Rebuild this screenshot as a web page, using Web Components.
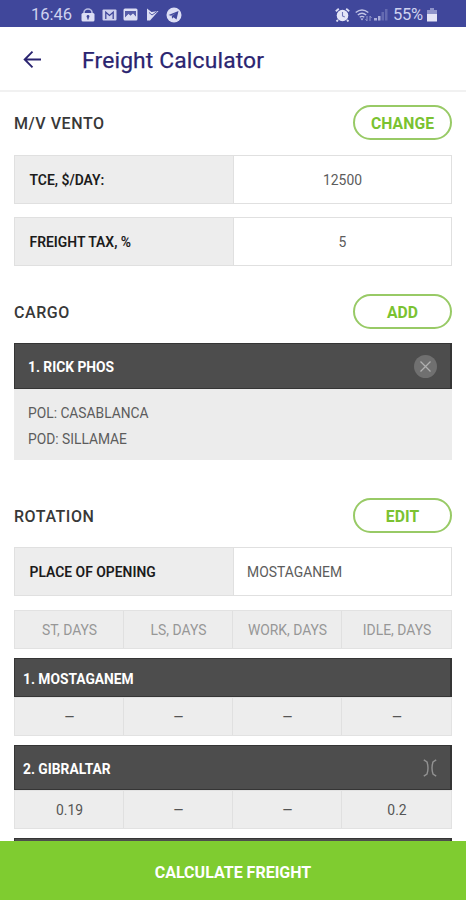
<!DOCTYPE html>
<html lang="en">
<head>
<meta charset="utf-8">
<title>Freight Calculator</title>
<style>
html,body{margin:0;height:100%;background:#fff}
body{font-family:Roboto,"Liberation Sans",sans-serif;overflow:hidden}
</style>
</head>
<body>
<freight-app></freight-app>
<script>
const define = (name, html) => {
  const t = document.createElement('template');
  t.innerHTML = html;
  customElements.define(name, class extends HTMLElement {
    constructor() {
      super();
      this.attachShadow({ mode: 'open' }).append(t.content.cloneNode(true));
    }
  });
};

define('status-bar', `
<style>
:host{display:flex;align-items:center;justify-content:space-between;height:27px;box-sizing:border-box;padding:2px 29px 0 31px;background:#40479b;color:#cfd2ef;font-size:16.5px;line-height:25px;flex:none}
div{display:flex;align-items:center}
svg{display:block;flex:none}
</style>
<div>
  <span style="width:50px">16:46</span>
  <svg width="14" height="14" viewBox="0 0 14 14"><path d="M3 6V4.400a4 3.400 0 0 1 8 0V6" fill="none" stroke="#b9bde2" stroke-width="1.600"/><rect x=".5" y="5" width="13" height="8.500" rx="1.500" fill="#dcdef4"/><circle cx="7" cy="8.500" r="1.400" fill="#40479b"/><path d="M6.300 8.500h1.400v3H6.300z" fill="#40479b"/></svg>
  <svg width="15" height="12" viewBox="0 0 15 12" style="margin-left:7px"><rect x=".5" y=".5" width="14" height="11" rx="1" fill="#cdd0ee"/><path d="M3.800 10V3.200L7.500 6.400l3.700-3.200V10" fill="none" stroke="#40479b" stroke-width="1.300"/></svg>
  <svg width="15" height="13" viewBox="0 0 15 13" style="margin-left:6px"><rect x=".5" y=".5" width="14" height="12" rx="1.500" fill="#dcdef4"/><path d="M2 9.500 5.500 6l2 1.800L10 5.500l3 3.200V3H2z" fill="#40479b" opacity=".85"/><path d="M2.500 9.500 5.500 6.200l2.100 2L10 5.800l3 3.700z" fill="#dcdef4"/></svg>
  <svg width="13" height="13" viewBox="0 0 13 13" style="margin-left:8px"><path d="M1 .5 5.500 4 12.500 3 4 12.500H1z" fill="#dcdef4"/><path d="m3 4.500 3 2.500 5-3.500" fill="none" stroke="#40479b" stroke-width=".9"/></svg>
  <svg width="16" height="16" viewBox="0 0 16 16" style="margin-left:7px"><circle cx="8" cy="8" r="7.500" fill="#dcdef4"/><path d="m2.500 8 10-4-2 8.500-3-2.200-1.500 1.500-.2-3L10 6 5 8.700z" fill="#40479b"/></svg>
</div>
<div>
  <svg width="15" height="14" viewBox="0 0 15 14"><circle cx="7.500" cy="7.500" r="5.800" fill="#e4e5f7"/><path d="m.8 3.200 3-2.500M14.200 3.200l-3-2.500M3 12l-1.500 1.500M12 12l1.500 1.500" stroke="#dcdef4" stroke-width="1.800"/><path d="M7.500 4v4l2.300 1" fill="none" stroke="#7278b8" stroke-width="1.100"/></svg>
  <svg width="18" height="14" viewBox="0 0 18 14" style="margin-left:5px"><g fill="none" stroke="#c1c4e6" stroke-width="1.400"><path d="M.7 4.500q6.300-5 12.600 0M2.800 7q4.200-3.500 8.400 0M4.700 9.300q2.300-1.900 4.600 0"/></g><path d="M5.500 10.500h3L7 12.500z" fill="#c1c4e6"/><path d="M12 8v5m-1.500-2L12 13M15 13V8l1.500 2" fill="none" stroke="#8f94ca"/></svg>
  <svg width="14" height="13" viewBox="0 0 14 13" style="margin-left:1px"><g fill="#a9add9"><path d="M0 10h3v2.500H0zM4 8h2.500v4.500H4z"/><path d="M7.500 4H10v8.500H7.500zM11 1h2.500v11.500H11z" opacity=".35"/></g></svg>
  <span style="margin-left:5px;width:32px;letter-spacing:-.3px">55%</span>
  <svg width="10" height="14" viewBox="0 0 10 14" style="margin-left:2px"><path d="M3 0h4v2h3v4H0V2h3z" fill="#8f94ca"/><path d="M0 6h10v7.500H0z" fill="#e4e5f7"/></svg>
</div>`);

define('app-header', `
<style>
:host{display:flex;align-items:center;height:65px;box-sizing:border-box;border-bottom:2px solid #f1f1f1;padding:3px 0 0 23px;color:#2a2470;font-size:22.8px;font-weight:400;letter-spacing:.17px;-webkit-text-stroke:.25px #2a2470;flex:none;background:#fff}
svg{display:block;margin:-1px 40px 0 0}
</style>
<svg width="19" height="18" viewBox="0 0 19 18"><path d="M18 8.500H2M9.500 .7 1.700 8.500l7.800 7.800" fill="none" stroke="#2a2470" stroke-width="1.900"/></svg>
<slot></slot>`);

define('pill-button', `
<style>
:host{display:flex;align-items:center;justify-content:center;box-sizing:border-box;width:99px;height:35px;border:2px solid #98ca66;border-radius:18px;color:#7ac231;font-size:15.7px;font-weight:700;padding-top:1px}
</style><slot></slot>`);

define('section-head', `
<style>
:host{display:flex;align-items:center;justify-content:space-between;height:35px;font-size:16px;font-weight:500;color:#383838;letter-spacing:.55px}
span{padding-top:2px}
::slotted(pill-button){letter-spacing:.1px}
</style><span><slot></slot></span><slot name="action"></slot>`);

define('field-row', `
<style>
:host{display:grid;grid-template-columns:1fr 1fr;box-sizing:border-box;height:49px;border:1px solid #e0e0e0;font-size:13.9px;line-height:47px}
.l{background:#ededed;padding-left:14.500px;font-weight:600;color:#1b1b1b}
.v{border-left:1px solid #e0e0e0;padding:0 13px 0 13px;color:#5c5c5c;text-align:var(--value-align,center)}
span{display:block}
.v,.l{padding-top:1px;height:46px}
</style>
<div class="l"><slot name="label"></slot></div><div class="v"><slot></slot></div>`);

define('dark-bar', `
<style>
:host{display:flex;align-items:center;justify-content:space-between;box-sizing:border-box;height:var(--bar-height,46px);padding:2px var(--bar-right,13px) 0 var(--bar-left,13px);background:#4d4d4d;border:1px solid #353535;border-width:1px 2px 1px 1px;color:#fff;font-size:13.8px;font-weight:700}
::slotted([slot=icon]){margin-top:-1px}
</style><slot></slot><slot name="icon"></slot>`);

define('cargo-details', `
<style>
:host{display:block;height:71px;box-sizing:border-box;background:#ececec;padding:11px 14px;font-size:13.8px;line-height:26px;color:#5c5c5c}
::slotted(div){height:26px}
</style><slot></slot>`);

define('day-cells', `
<style>
:host{display:grid;grid-template-columns:repeat(4,1fr);box-sizing:border-box;height:39px;background:#ededed;border:1px solid #e2e2e2;font-size:13.9px;color:var(--cell-color,#555);line-height:39px;text-align:center}
::slotted(span){height:37px;padding-left:1px}
::slotted(span:not(:last-child)){border-right:1px solid #e0e0e0}
::slotted(.dash){font-size:17px;line-height:38px}
</style><slot></slot>`);

define('close-icon', `
<style>:host,svg{display:block}</style>
<svg width="23" height="23" viewBox="0 0 23 23"><circle cx="11.500" cy="11.500" r="11.500" fill="#707070"/><path d="m6.500 6.500 10 10m0-10-10 10" stroke="#b0b0b0" stroke-width="1.300"/></svg>`);

define('canal-icon', `
<style>:host,svg{display:block}</style>
<svg width="14" height="18" viewBox="0 0 14 18"><path d="M.8.8 4 3q2 6 0 12L.8 17.200M13.200.8 10 3q-2 6 0 12l3.200 2.200" fill="none" stroke="#929292" stroke-width="1.400"/></svg>`);

define('action-bar', `
<style>
:host{display:flex;align-items:center;justify-content:center;height:59px;box-sizing:border-box;padding-top:3px;background:#7fcc30;color:#fff;font-size:16px;font-weight:700;flex:none}
</style><slot></slot>`);

define('freight-app', `
<style>
:host{display:flex;flex-direction:column;height:900px;width:466px;background:#fff}
main{flex:1;min-height:0;overflow:hidden;display:flex;flex-direction:column;padding:13px 14px 0}
main>*{flex:none}
.gap{margin-top:14px}
</style>
<status-bar></status-bar>
<app-header><span>Freight Calculator</span></app-header>
<main>
  <section-head>M/V VENTO<pill-button slot="action">CHANGE</pill-button></section-head>
  <field-row style="margin-top:15px"><span slot="label">TCE, $/DAY:</span>12500</field-row>
  <field-row style="margin-top:13px"><span slot="label">FREIGHT TAX, %</span>5</field-row>
  <section-head style="margin-top:28px">CARGO<pill-button slot="action">ADD</pill-button></section-head>
  <dark-bar class="gap"><span>1. RICK PHOS</span><close-icon slot="icon"></close-icon></dark-bar>
  <cargo-details><div>POL: CASABLANCA</div><div>POD: SILLAMAE</div></cargo-details>
  <section-head style="margin-top:38px">ROTATION<pill-button slot="action">EDIT</pill-button></section-head>
  <field-row class="gap" style="--value-align:left"><span slot="label">PLACE OF OPENING</span>MOSTAGANEM</field-row>
  <day-cells class="gap" style="--cell-color:#979797"><span>ST, DAYS</span><span>LS, DAYS</span><span>WORK, DAYS</span><span>IDLE, DAYS</span></day-cells>
  <dark-bar style="margin-top:9px;--bar-height:39px;--bar-left:8px"><span>1. MOSTAGANEM</span></dark-bar>
  <day-cells><span class="dash">–</span><span class="dash">–</span><span class="dash">–</span><span class="dash">–</span></day-cells>
  <dark-bar style="margin-top:9px;--bar-height:45px;--bar-left:8px"><span>2. GIBRALTAR</span><canal-icon slot="icon"></canal-icon></dark-bar>
  <day-cells><span>0.19</span><span class="dash">–</span><span class="dash">–</span><span>0.2</span></day-cells>
  <dark-bar style="margin-top:9px"></dark-bar>
</main>
<action-bar>CALCULATE FREIGHT</action-bar>`);
</script>
</body>
</html>
